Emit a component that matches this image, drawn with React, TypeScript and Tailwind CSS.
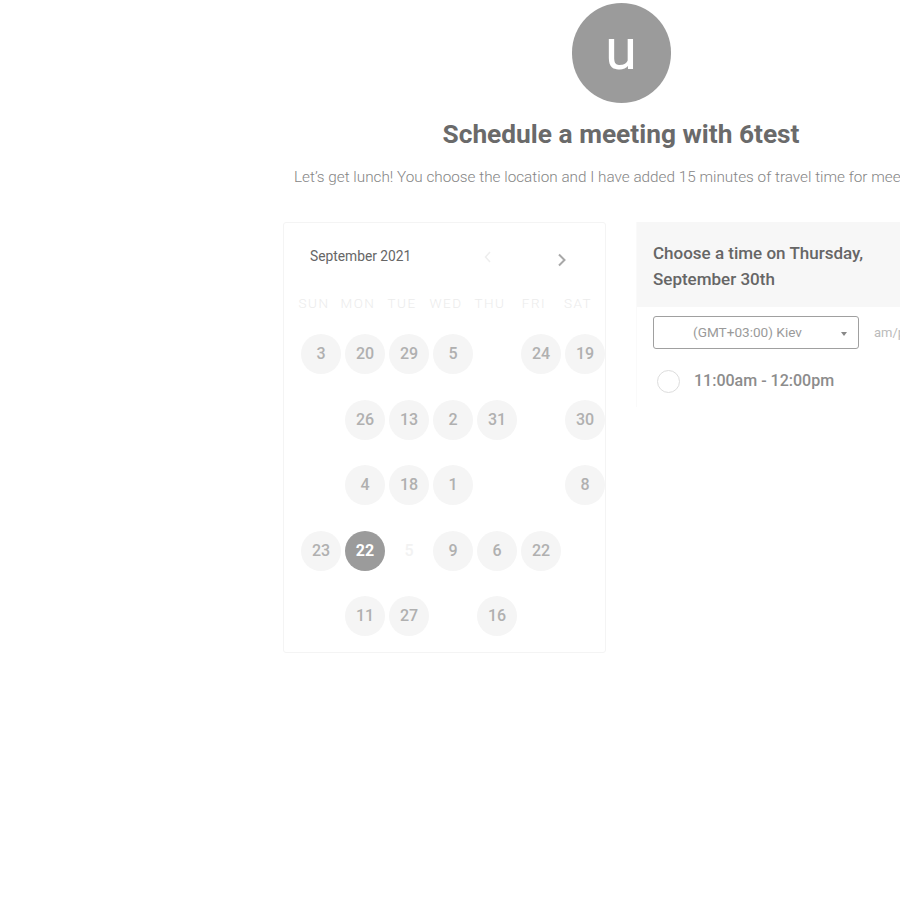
import React from "react";

const rows: (string | null)[][] = [
  ["3", "20", "29", "5", null, "24", "19"],
  [null, "26", "13", "2", "31", null, "30"],
  [null, "4", "18", "1", null, null, "8"],
  ["23", "22*", "ghost5", "9", "6", "22", null],
  [null, "11", "27", null, "16", null, null],
];

const days = ["SUN", "MON", "TUE", "WED", "THU", "FRI", "SAT"];

function Cell({ v }: { v: string | null }) {
  if (v === null) return <div className="w-[40px] h-[40px]" />;
  if (v === "ghost5")
    return (
      <div className="w-[40px] h-[40px] flex items-center justify-center text-[16px] font-medium text-[#f2f2f2]">
        5
      </div>
    );
  if (v.endsWith("*"))
    return (
      <div className="w-[40px] h-[40px] rounded-full bg-[#9b9b9b] flex items-center justify-center text-[16px] font-bold text-white">
        {v.slice(0, -1)}
      </div>
    );
  return (
    <div className="w-[40px] h-[40px] rounded-full bg-[#f5f5f5] flex items-center justify-center text-[16px] font-medium text-[#b0b0b0]">
      {v}
    </div>
  );
}

export default function App() {
  return (
    <div
      className="w-[900px] h-[900px] overflow-hidden bg-white"
      style={{ fontFamily: "Roboto, 'Liberation Sans', sans-serif" }}
    >
      <div className="ml-[283px] w-[676px] flex flex-col items-center">
        <div className="mt-[3px] w-[99px] h-[100px] rounded-full bg-[#9b9b9b] flex items-center justify-center text-white text-[58px] leading-none pb-[8px]">
          u
        </div>
        <div className="mt-[16px] h-[30px] leading-[30px] text-[26.3px] font-bold text-[#6a6a6a]">
          Schedule a meeting with 6test
        </div>
        <div className="mt-[18px] h-[20px] leading-[20px] self-start ml-[11px] text-[15.3px] font-light text-[#858585] whitespace-nowrap">
          Let’s get lunch! You choose the location and I have added 15 minutes of travel time for meeting.
        </div>

        <div className="mt-[35px] w-full flex gap-[30px] items-start">
          {/* Calendar */}
          <div className="w-[323px] border border-[#f4f4f4] rounded-[3px] pt-[23px] pb-[16px]">
            <div className="h-[20px] flex items-center pl-[26px] relative">
              <span className="text-[13.8px] text-[#666]">September 2021</span>
              <svg
                className="absolute left-[200px] top-[5px]"
                width="8"
                height="12"
                viewBox="0 0 8 12"
              >
                <path d="M6 1 L1.5 6 L6 11" stroke="#eeeeee" strokeWidth="1.5" fill="none" />
              </svg>
              <svg
                className="absolute left-[273px] top-[7px]"
                width="10"
                height="14"
                viewBox="0 0 10 14"
              >
                <path d="M2 1.5 L7.5 7 L2 12.5" stroke="#a8a8a8" strokeWidth="2" fill="none" />
              </svg>
            </div>
            <div className="mt-[27px] pl-[8px] grid grid-cols-[repeat(7,44px)] h-[20px] items-center">
              {days.map((d) => (
                <div
                  key={d}
                  className="text-center text-[13.5px] font-light tracking-[1.5px] text-[#ececec]"
                >
                  {d}
                </div>
              ))}
            </div>
            <div className="mt-[21px] pl-[17px] grid grid-cols-[repeat(7,40px)] gap-x-[4px] gap-y-[25.5px]">
              {rows.flat().map((v, i) => (
                <Cell key={i} v={v} />
              ))}
            </div>
          </div>

          {/* Time panel */}
          <div className="w-[323px] min-h-[185px] border-l border-[#fafafa]">
            <div className="bg-[#f7f7f7] pl-[16px] pt-[18px] pb-[15px] h-[85px]">
              <div className="text-[17px] leading-[26px] font-medium text-[#666]">
                Choose a time on Thursday,
                <br />
                September 30th
              </div>
            </div>
            <div className="pl-[16px] pt-[9px] flex items-center gap-[15px]">
              <div className="w-[206px] h-[33px] border border-[#a0a0a0] rounded-[3px] flex items-center relative">
                <span className="ml-[39px] text-[13.6px] text-[#9a9a9a]">(GMT+03:00) Kiev</span>
                <span className="absolute right-[11px] top-[15px] w-0 h-0 border-l-[3px] border-r-[3px] border-t-[4px] border-l-transparent border-r-transparent border-t-[#888]" />
              </div>
              <span className="text-[13px] text-[#bbbbbb]">am/pm</span>
            </div>
            <div className="pl-[20px] mt-[20px] flex items-center gap-[14px]">
              <div className="w-[23px] h-[23px] rounded-full border border-[#dddddd] bg-white" />
              <span className="text-[16px] font-medium text-[#8c8c8c]">11:00am - 12:00pm</span>
            </div>
          </div>
        </div>
      </div>
    </div>
  );
}
